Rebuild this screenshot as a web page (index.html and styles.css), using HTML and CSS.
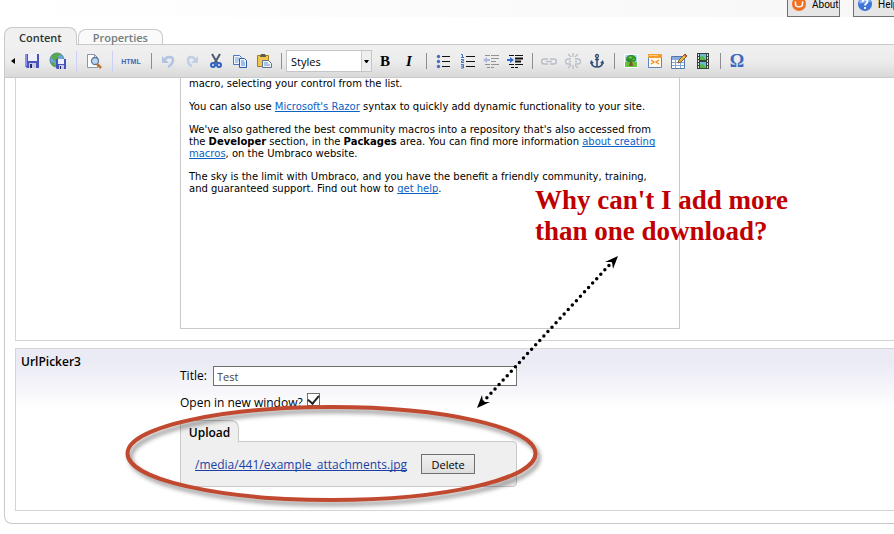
FILE: index.html
```
<!DOCTYPE html>
<html lang="en">

<head>
  <meta charset="utf-8">
  <title>Content editor</title>
  <link rel="stylesheet" href="styles.css">
</head>

<body>
  <!-- Top bar -->
  <header class="topbar">
    <button class="top-btn">
      <svg width="16" height="16" viewBox="0 0 16 16"><circle cx="8" cy="8" r="7" fill="#f36f21"/><path d="M4.500 5.500v3c0 3 7 3 7 0v-3" fill="none" stroke="#fff" stroke-width="1.500"/></svg>
      About
    </button>
    <button class="top-btn">
      <svg width="16" height="16" viewBox="0 0 16 16"><circle cx="8" cy="8" r="7" fill="#3f74d8"/><path d="M2 7a6 6 0 0 1 12-1c-4-1-8 3-12 1z" fill="#86aef2"/><path d="M5.500 6c0-3.500 5-3.500 5-.5 0 2-2.500 2-2.500 4M8 11v2" fill="none" stroke="#fff" stroke-width="1.800"/></svg>
      Help
    </button>
  </header>

  <!-- Tabs -->
  <nav class="tabs">
    <a href="#content" class="tab active">Content</a>
    <a href="#properties" class="tab">Properties</a>
  </nav>

  <main class="panel" id="content">
    <!-- Editor toolbar -->
    <div class="toolbar">
      <button class="tool scroll" aria-label="Scroll left"><svg width="4" height="6" viewBox="0 0 4 6"><path d="M4 0v6L0 3z"/></svg></button>
      <button class="tool" aria-label="Save">
        <svg width="16" height="16" viewBox="0 0 16 16"><path d="M1 1h14v14H3l-2-2z" fill="#4a52bd"/><path d="M1 1h2v12H1z" fill="#8890e8"/><path d="M4 1h9v7H4z" fill="#eef1fb"/><path d="M5 10h7v5H5z" fill="#c5cbe4"/><path d="M6 11h2v4H6z" fill="#252a66"/></svg>
      </button>
      <button class="tool wide" aria-label="Save and publish">
        <svg width="18" height="18" viewBox="0 0 18 18"><circle cx="8" cy="8" r="7" fill="#69a7e0" stroke="#5380a5"/><path d="M2 5c2-4 7-5 10-3L9 5l1 2-4 3zM2 10l4 1 1 4c-3 0-5-2-5-5z" fill="#58a84c"/><path d="M7 7h10v10H8l-1-1z" fill="#4a52bd"/><path d="M9 7h6v5H9z" fill="#eef1fb"/><path d="M10 13h5v4h-5z" fill="#c5cbe4"/><path d="M11 14h1v3h-1z" fill="#252a66"/></svg>
      </button>
      <span class="split"></span>
      <button class="tool wide" aria-label="Preview">
        <svg width="16" height="16" viewBox="0 0 16 16"><path d="M1.500 1.500h7l3 3v10h-10z" fill="#fff" stroke="#8b95a8"/><path d="M8.500 1.500v3h3" fill="none" stroke="#8b95a8"/><circle cx="9" cy="8" r="3.500" fill="#b9d7f2" stroke="#61789b" stroke-width="1.300"/><path d="M11 11l4 4" stroke="#bd7431" stroke-width="2.500"/></svg>
      </button>
      <span class="split"></span>
      <button class="tool html">HTML</button>
      <span class="sep"></span>
      <button class="tool" aria-label="Undo">
        <svg width="16" height="16" viewBox="0 0 16 16"><path d="M5 7c1-4 8-4 8 0 0 3-2 5-5 7" fill="none" stroke="#b3c3e2" stroke-width="2.500"/><path d="M2 3v7h7z" fill="#b3c3e2"/></svg>
      </button>
      <button class="tool" aria-label="Redo">
        <svg width="16" height="16" viewBox="0 0 16 16"><path d="M11 7c-1-4-7-4-7 0 0 3 1 5 4 6" fill="none" stroke="#c0cee6" stroke-width="2.500"/><path d="M14 3v7H7z" fill="#c0cee6"/></svg>
      </button>
      <button class="tool" aria-label="Cut">
        <svg width="16" height="16" viewBox="0 0 16 16"><path d="M4 1l6 10M12 1L6 11" stroke="#4b5870" stroke-width="2"/><circle cx="5" cy="12" r="2" fill="none" stroke="#2f62c0" stroke-width="2"/><circle cx="11" cy="12" r="2" fill="none" stroke="#2f62c0" stroke-width="2"/></svg>
      </button>
      <button class="tool" aria-label="Copy">
        <svg width="16" height="16" viewBox="0 0 16 16"><path d="M1.500 2.500h6l2 2v7h-8z" fill="#eaf3ff" stroke="#4c79bd"/><path d="M3 5h4M3 7h4M3 9h3" stroke="#7ba2d9"/><path d="M7.500 5.500h5l2 2v7h-7z" fill="#eaf3ff" stroke="#2d5ba6"/><path d="M9 8h3M9 10h4M9 12h4" stroke="#5889cf"/></svg>
      </button>
      <button class="tool" aria-label="Paste">
        <svg width="16" height="16" viewBox="0 0 16 16"><path d="M1.500 2.500h11v11h-11z" fill="#f0c74c" stroke="#a47c25"/><path d="M4 4l1-3h4l1 3z" fill="#5d5a52"/><path d="M6.500 7.500h6l3 3v4h-9z" fill="#edf4fc" stroke="#5f748f"/><path d="M8 10h4M8 12h6" stroke="#6b91c7"/></svg>
      </button>
      <span class="sep"></span>
      <div class="style-box">
        <select aria-label="Styles">
          <option>Styles</option>
        </select>
        <svg class="caret" width="5" height="3" viewBox="0 0 5 3"><path d="M0 0h5L3 3H2z"/></svg>
      </div>
      <button class="tool letter" aria-label="Bold">B</button>
      <button class="tool letter italic" aria-label="Italic">I</button>
      <span class="sep"></span>
      <button class="tool" aria-label="Bullet list">
        <svg width="16" height="16" viewBox="0 0 16 16"><path d="M7 3.500h8M7 8.500h8M7 13.500h8" stroke="#111"/><circle cx="3.500" cy="3.500" r="1.700" fill="#456fc0"/><circle cx="3.500" cy="8.500" r="1.700" fill="#456fc0"/><circle cx="3.500" cy="13.500" r="1.700" fill="#456fc0"/></svg>
      </button>
      <button class="tool" aria-label="Numbered list">
        <svg width="16" height="16" viewBox="0 0 16 16"><path d="M7 3.500h9M7 8.500h9M7 13.500h9" stroke="#111"/><path d="M2 1.500h1.500V4M2 4.500h3M2 6.500h2.500v1.500H2.500v1.500H5M2 11.500h2.500v3.500H2M2 13.200h2" fill="none" stroke="#456fc0"/></svg>
      </button>
      <button class="tool faded" aria-label="Outdent">
        <svg width="16" height="16" viewBox="0 0 16 16"><path d="M2 2.500h5M8 2.500h8M8 5.500h8M8 8.500h5M2 11.500h5M8 11.500h8M4 14.500h3M8 14.500h3" stroke="#111"/><path d="M0 7l4-3v2h3v2H4v2z" fill="#456fc0"/></svg>
      </button>
      <button class="tool" aria-label="Indent">
        <svg width="16" height="16" viewBox="0 0 16 16"><path d="M2 2.500h5M8 2.500h8M2 11.500h5M8 11.500h8M4 14.500h3M8 14.500h3" stroke="#111"/><path d="M8 5.500h8M8 8.500h6" stroke="#111" stroke-width="2"/><path d="M7 7L3 4v2H0v2h3v2z" fill="#3268cf"/></svg>
      </button>
      <span class="sep"></span>
      <button class="tool" aria-label="Insert link">
        <svg width="16" height="16" viewBox="0 0 16 16"><path d="M7 6H3a2 2 0 0 0 0 5h4M9 6h4a2 2 0 0 1 0 5H9M5 8.500h6" fill="none" stroke="#b8bec8" stroke-width="1.500"/></svg>
      </button>
      <button class="tool" aria-label="Remove link">
        <svg width="16" height="16" viewBox="0 0 16 16"><path d="M6 6H3a2 2 0 0 0 0 5h3M10 6h3a2 2 0 0 1 0 5h-3M4 8.500h2M10 8.500h2M8 0v4M3 1l3 3M13 1l-3 3M8 12v4M6 12l-3 3M10 12l3 3" fill="none" stroke="#b8bec8" stroke-width="1.300"/></svg>
      </button>
      <button class="tool" aria-label="Anchor">
        <svg width="16" height="16" viewBox="0 0 16 16"><circle cx="8" cy="3" r="1.500" fill="none" stroke="#344f78" stroke-width="1.300"/><path d="M8 4v10M6 6.500h4M2.500 9c0 3 2 5 5.500 5s5.500-2 5.500-5" fill="none" stroke="#344f78" stroke-width="1.600"/><path d="M1 11l1-4 3 3zM15 11l-1-4-3 3z" fill="#344f78"/></svg>
      </button>
      <span class="sep"></span>
      <button class="tool" aria-label="Insert image">
        <svg width="16" height="16" viewBox="0 0 16 16"><path d="M1 1h14v14H1z" fill="#fff"/><path d="M2 2h12v7H2z" fill="#acd9f7"/><path d="M2 9h12v5H2z" fill="#63c43b"/><path d="M7 8h2l1 5H6z" fill="#875526"/><path d="M3 7c0-3 2-5 5-5s6 2 5 5c-1 3-3 1-5 2-2 0-4 1-5-2z" fill="#2f8d2a"/><path d="M5 5l2-2 3 1-2 2zM9 7l2-2 1 2z" fill="#6cc13e"/></svg>
      </button>
      <button class="tool" aria-label="Insert macro">
        <svg width="16" height="16" viewBox="0 0 16 16"><path d="M1.500 1.500h13v13h-13z" fill="#fff7e8" stroke="#5b86c0"/><path d="M1 1h14v4H1z" fill="#f79b2e"/><path d="M2 2h9v1H2z" fill="#ffd08c"/><path d="M4 7l3 2-3 2M12 7L9 9l3 2" fill="none" stroke="#ef8b26" stroke-width="1.300"/></svg>
      </button>
      <button class="tool" aria-label="Insert table">
        <svg width="16" height="16" viewBox="0 0 16 16"><path d="M.5 3.500h13v12H.5z" fill="#fff" stroke="#5278af"/><path d="M1 4h12v3H1z" fill="#85aade"/><path d="M1 9.500h12M1 12.500h12M4.500 7v8M9.500 7v8" stroke="#88a7cf"/><path d="M7 10l1-3 6-6 2 2-6 6z" fill="#e9b747" stroke="#805b35"/><path d="M13 2l1-1 2 2-1 1z" fill="#c84536"/></svg>
      </button>
      <button class="tool" aria-label="Insert media">
        <svg width="16" height="16" viewBox="0 0 16 16"><path d="M2 0h12v16H2z" fill="#394139"/><path d="M5 1h6v6H5zM5 9h6v6H5z" fill="#68bdd6"/><path d="M5 4l3-1 3 4H5zM5 12l3-1 3 4H5z" fill="#55b845"/><path d="M3.500 1v14M12.500 1v14" stroke="#e5e5dc" stroke-dasharray="2 1"/></svg>
      </button>
      <span class="sep"></span>
      <button class="tool omega" aria-label="Special character">Ω</button>
    </div>

    <!-- Rich text property -->
    <section class="property text-property">
      <div class="editor">
        <p>macro, selecting your control from the list.</p>
        <p>You can also use <a href="#razor">Microsoft's Razor</a> syntax to quickly add dynamic functionality to your site.</p>
        <p>We've also gathered the best community macros into a repository that's also accessed from<br>the <b>Developer</b> section, in the <b>Packages</b> area. You can find more information <a href="#macros">about creating<br>macros</a>, on the Umbraco website.</p>
        <p>The sky is the limit with Umbraco, and you have the benefit a friendly community, training,<br>and guaranteed support. Find out how to <a href="#help">get help</a>.</p>
      </div>
    </section>

    <!-- Url picker property -->
    <section class="property picker">
      <h2>UrlPicker3</h2>
      <div class="fields">
        <div class="row">
          <label for="title">Title:</label>
          <input type="text" id="title" value="Test">
        </div>
        <div class="row">
          <label for="newwin">Open in new window?</label>
          <input type="checkbox" id="newwin" checked>
        </div>
        <div class="upload">
          <h3>Upload</h3>
          <div class="upload-box">
            <a href="#media">/media/441/example_attachments.jpg</a>
            <button class="delete">Delete</button>
          </div>
        </div>
      </div>
    </section>
  </main>

  <!-- Notes drawn over the page -->
  <p class="note">Why can't I add more<br>than one download?</p>
  <svg class="marks" width="700" height="534" viewBox="0 0 700 534">
    <ellipse class="ring" cx="331.500" cy="453.500" rx="204" ry="46.500"/>
    <path class="dots" d="M613 261L482 403"/>
    <path d="M618 256l-13 6 7 0 1 7zM477 408l5-13 1 7 7 0z"/>
  </svg>
</body>

</html>
```
FILE: styles.css
```
* {
  box-sizing: border-box;
}

body {
  margin: 0;
  background: #fff;
  color: #000;
  font-family: "Open Sans", sans-serif;
  font-size: 12px;
  overflow: hidden;
}

a {
  text-decoration-skip-ink: none;
}

button,
input,
select {
  font-family: inherit;
  font-size: 12px;
  color: #000;
}

/* Top bar */
.topbar {
  display: flex;
  justify-content: flex-end;
  align-items: flex-end;
  gap: 13px;
  height: 17px;
  margin-right: -12px;
  background: linear-gradient(to right, #fff, #f7f7f7);
}

.top-btn {
  display: flex;
  align-items: center;
  gap: 5px;
  height: 26px;
  width: 53px;
  padding: 0 3px;
  border: 1px solid #707070;
  background: #e6e6e6;
  font-family: Roboto, sans-serif;
  font-size: 10px;
}

.top-btn svg {
  flex-shrink: 0;
}

/* Tabs */
.tabs {
  display: flex;
  align-items: flex-end;
  gap: 1px;
  height: 27px;
  padding-left: 4px;
}

.tab {
  height: 15px;
  padding: 0 14px;
  border: 1px solid #c9c9c9;
  border-bottom: 0;
  border-radius: 8px 8px 0 0;
  background: #fafafa;
  color: #737d7d;
  font-size: 11px;
  font-weight: 600;
  line-height: 15px;
  text-decoration: none;
}

.tab.active {
  position: relative;
  height: 18px;
  margin-bottom: -1px;
  background: #f0f0f0;
  color: #2a3434;
  line-height: 20px;
}

/* Main panel */
.panel {
  margin-left: 4px;
  padding-bottom: 12px;
  border: 1px solid #c9c9c9;
  border-right: 0;
  border-radius: 0 0 0 8px;
}

.toolbar {
  display: flex;
  align-items: center;
  height: 33px;
  border-bottom: 1px solid #c9c9c9;
  background: linear-gradient(#f0f0f0, #ececec 50%, #d9d9d9);
}

.tool {
  display: flex;
  align-items: center;
  justify-content: center;
  flex-shrink: 0;
  width: 24px;
  height: 24px;
  padding: 0;
  border: 0;
  background: none;
}

.scroll {
  width: 15px;
}

.wide {
  width: 28px;
}

.html {
  width: 30px;
  color: #3d68b5;
  font-family: "Liberation Sans", sans-serif;
  font-size: 7px;
  font-weight: bold;
}

.faded {
  opacity: .4;
}

.letter {
  font-family: "Liberation Serif", serif;
  font-size: 15px;
  font-weight: bold;
}

.italic {
  font-style: italic;
}

.omega {
  color: #3d68c0;
  font-family: "Liberation Serif", serif;
  font-size: 18px;
  font-weight: bold;
}

.sep,
.split {
  flex-shrink: 0;
  width: 10px;
  height: 16px;
  background: linear-gradient(#8e8e8e, #8e8e8e) center / 1px 100% no-repeat;
}

.split {
  width: 8px;
  height: 21px;
  background-image: linear-gradient(#ccd0f4, #ccd0f4);
}

.style-box {
  position: relative;
  width: 87px;
  padding-right: 1px;
}

.style-box select {
  display: block;
  width: 100%;
  height: 22px;
  padding: 0 4px;
  border: 1px solid #c5c5c5;
  border-radius: 0;
  background: linear-gradient(to left, #eee 9px, #ccc 9px, #ccc 10px, #fff 10px);
  font-size: 11px;
  appearance: none;
}

.caret {
  position: absolute;
  right: 4px;
  top: 10px;
}

/* Properties */
.property {
  margin-left: 10px;
  border: 1px solid #d5d5d5;
  border-right: 0;
}

.text-property {
  margin-bottom: 7px;
  padding: 0 0 11px 164px;
  border-top: 0;
}

.editor {
  width: 500px;
  height: 251px;
  padding: 0 8px;
  border: 1px solid #c9c9c9;
  border-top: 0;
  font-family: "DejaVu Sans", sans-serif;
  font-size: 10px;
  line-height: 12px;
  white-space: nowrap;
}

.editor p {
  margin: 0 0 11px;
}

.editor a {
  color: #0a62c4;
}

.picker {
  display: grid;
  grid-template-columns: 159px 1fr;
  padding: 5px 0 23px 5px;
  background: linear-gradient(#ebebf5, #ebebf5 15px, #fff 60px);
}

.picker h2 {
  margin: 0;
  font-size: 12px;
  font-weight: 600;
  line-height: 16px;
}

.fields {
  width: 337px;
  padding-top: 12px;
}

.row {
  display: flex;
  gap: 4px;
  height: 20px;
  margin-bottom: 7px;
  line-height: 20px;
}

.row label {
  min-width: 29px;
}

.row input[type="text"] {
  flex: 1;
  height: 20px;
  padding: 0 3px;
  border: 1px solid #707070;
  background: #fff;
  color: #444;
  font-size: 11px;
}

.row input[type="checkbox"] {
  display: grid;
  place-content: center;
  width: 13px;
  height: 13px;
  margin: 0;
  border: 1px solid #707070;
  background: #fff;
  appearance: none;
}

.row input[type="checkbox"]:checked::before {
  content: "";
  width: 5px;
  height: 9px;
  margin-bottom: 3px;
  border: solid #222;
  border-width: 0 2px 2px 0;
  transform: rotate(40deg);
}

/* Upload box */
.upload h3 {
  position: relative;
  width: 59px;
  height: 22px;
  margin: 0 0 -1px;
  border: 1px solid #c9c9c9;
  border-bottom: 0;
  border-radius: 0 8px 0 0;
  background: #efefef;
  font-size: 12px;
  font-weight: 600;
  line-height: 24px;
  text-align: center;
}

.upload-box {
  display: flex;
  align-items: center;
  gap: 14px;
  height: 46px;
  padding-left: 14px;
  border: 1px solid #c9c9c9;
  border-radius: 0 4px 4px 0;
  background: #efefef;
}

.upload-box a {
  color: #1d3fa5;
}

.delete {
  width: 54px;
  height: 20px;
  padding: 0;
  border: 1px solid #707070;
  background: linear-gradient(#f0f0f0, #dedede);
  font-size: 11px;
}

/* Notes over the page */
.note {
  position: absolute;
  left: 535px;
  top: 185px;
  margin: 0;
  color: #c00000;
  font-family: "Liberation Serif", serif;
  font-size: 27px;
  font-weight: bold;
  line-height: 31px;
}

.marks {
  position: absolute;
  left: 0;
  top: 0;
  pointer-events: none;
}

.ring {
  fill: none;
  stroke: #c0492f;
  stroke-width: 4;
  filter: drop-shadow(3px 4px 2px rgba(0, 0, 0, .4));
}

.dots {
  stroke: #000;
  stroke-width: 3.500;
  stroke-linecap: round;
  stroke-dasharray: 0 6;
}
```
